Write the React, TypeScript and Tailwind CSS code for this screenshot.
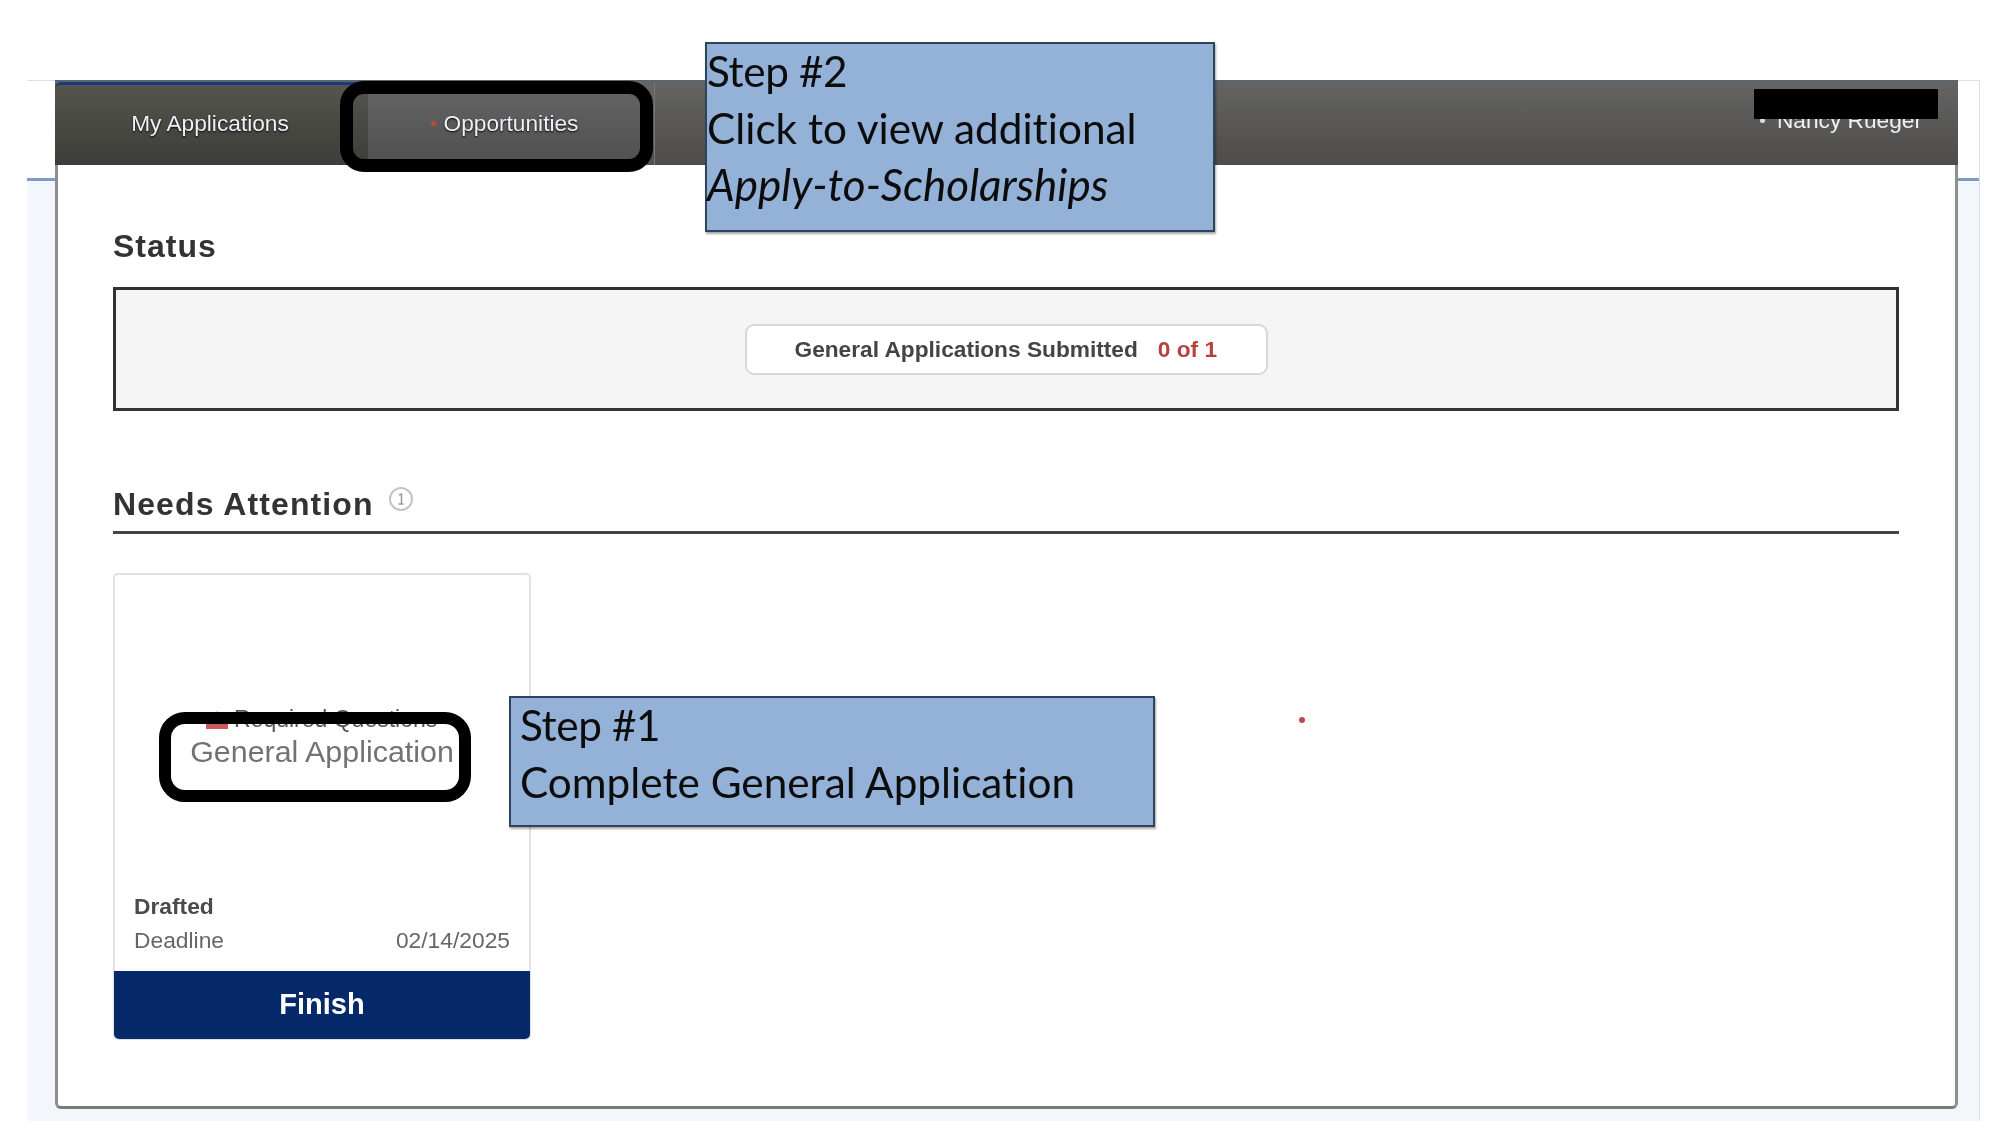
import React from 'react'

const Callout = ({ className, children }: { className: string; children: React.ReactNode }) => (
    <div className={`absolute z-20 bg-[#94b2d7] border-2 border-[#2f435c] shadow-[1px_2px_2px_rgba(0,0,0,0.35)] font-['Lato',sans-serif] text-[42.300px] leading-[56.500px] text-[#0c0c0c] [font-variant-ligatures:none] ${className}`}>
        {children}
    </div>
)

const App = () => {
    return (
        <div className="relative h-[1144px] w-[2016px] overflow-hidden bg-white font-['Liberation_Sans',Arial,sans-serif] blur-[0.6px]">
            <div className="absolute left-[27px] top-[80px] h-[1041px] w-[1953px] border-t border-r border-[#d5e3f1] bg-[linear-gradient(#fff_0,#fff_97px,#7f9cc4_97px,#7f9cc4_100px,#f3f6fb_100px)]">
                <div className="-mt-[1px] ml-[28px] h-[1029px] w-[1903px] rounded-b-md border-x-[3px] border-b-[3px] border-x-[#8f8f8f] border-b-[#7a7a7a] bg-white">
                    <nav className="relative -mx-[3px] flex h-[85px] border-t-2 border-[#5c6670] bg-gradient-to-b from-[#646464] to-[#4d4c48]">
                        <div className="flex w-[313px] items-center justify-center rounded-tl-md border-t-[3px] border-[#1d3a78] bg-gradient-to-b from-[#55544f] to-[#3d3e39] pb-[4px] pr-[3px] text-[22.700px] text-[#eef1f5] [text-shadow:0_1px_2px_#000]">
                            My Applications
                        </div>
                        <div className="flex w-[287px] items-center justify-center gap-[8px] border-r border-[#777] bg-gradient-to-b from-[#666] to-[#4f4f4f] pr-[13px] text-[22.700px] text-[#eef1f5] [text-shadow:0_1px_2px_#000]">
                            <span className="h-[5px] w-[5px] rounded-full bg-[#c2492f]" />
                            Opportunities
                        </div>
                        <div className="ml-auto mr-[36px] mt-[28px] flex h-[20px] items-center gap-[12px] overflow-visible text-[22.700px] text-[#eef1f5]">
                            <span className="h-[5px] w-[5px] rounded-full bg-[#ddd]" />
                            Nancy Rueger
                        </div>
                        <div className="absolute right-[20px] top-[7px] h-[30px] w-[184px] rounded-[1px] bg-black" />
                    </nav>

                    <main className="pl-[55px] pr-[56px]">
                        <h2 className="mt-[62px] text-[32px] leading-[38px] font-bold tracking-[1px] text-[#333]">Status</h2>
                        <section className="mt-[22px] flex h-[124px] items-center justify-center border-[3px] border-[#333] bg-[#f5f5f5]">
                            <div className="flex h-[51px] w-[523px] items-center rounded-[9px] border-2 border-[#d8d8d8] bg-white pl-[48px] text-[22.700px] font-bold">
                                <span className="text-[#444]">General Applications Submitted</span>
                                <span className="ml-[20px] text-[#b5423f]">0 of 1</span>
                            </div>
                        </section>

                        <div className="mt-[74px] flex h-[49px] items-start gap-[14px] border-b-[3px] border-[#444]">
                            <h2 className="text-[32px] leading-[38px] font-bold tracking-[1.100px] text-[#333]">Needs Attention</h2>
                            <svg width="26" height="26" viewBox="0 0 26 26" className="mt-[1px]">
                                <circle cx="13" cy="13" r="11" fill="none" stroke="#c4c4c4" strokeWidth="2" />
                                <path d="M11 9l2.500-1v10M10.500 18h5" fill="none" stroke="#999" strokeWidth="1.500" />
                            </svg>
                        </div>

                        <article className="mt-[39px] flex h-[467px] w-[418px] flex-col rounded-[5px] border-2 border-[#e2e2e2] bg-white">
                            <div className="relative flex-1">
                                <div className="absolute left-[90px] top-[132px] flex items-center gap-[5px] text-[23px] leading-[24px] text-[#555]">
                                    <svg width="24" height="24" viewBox="0 0 24 24">
                                        <path d="M1 22V11h7l4-7 4 7h7v11z" fill="#c95a5f" />
                                    </svg>
                                    Required Questions
                                </div>
                                <div className="absolute left-0 right-0 top-[158px] text-center text-[30.400px] leading-[36px] text-[#6f7378]">General Application</div>
                                <div className="absolute left-[44px] top-[137px] z-10 h-[90px] w-[312px] rounded-[26px] border-[12px] border-black" />
                            </div>
                            <div className="px-[19px] pb-[14px] text-[22.800px] leading-[34px]">
                                <div className="font-bold text-[#4a4a4a]">Drafted</div>
                                <div className="flex justify-between text-[#666]">
                                    <span>Deadline</span>
                                    <span>02/14/2025</span>
                                </div>
                            </div>
                            <button className="-mx-[1px] -mb-[1px] h-[68px] rounded-b-[5px] bg-[#06296a] text-[29px] font-bold text-white">Finish</button>
                        </article>
                    </main>
                </div>
            </div>

            {/* hand-drawn annotations on top of the page */}
            <div className="absolute left-[340px] top-[81px] z-10 h-[91px] w-[313px] rounded-[24px] border-[13px] border-black" />
            <Callout className="left-[705px] top-[42px] h-[190px] w-[510px]">
                <p className="-mt-[1px] tracking-[-0.400px]">Step #2</p>
                <p>Click to view additional</p>
                <p className="text-[44px] italic">Apply-to-Scholarships</p>
            </Callout>
            <Callout className="left-[509px] top-[696px] h-[131px] w-[646px] pl-[9px]">
                <p className="-mt-[1px] tracking-[-0.400px]">Step #1</p>
                <p>Complete General Application</p>
            </Callout>
            <div className="absolute left-[1299px] top-[717px] h-[6px] w-[6px] rounded-full bg-[#bb4a4a]" />
        </div>
    )
}

export default App
